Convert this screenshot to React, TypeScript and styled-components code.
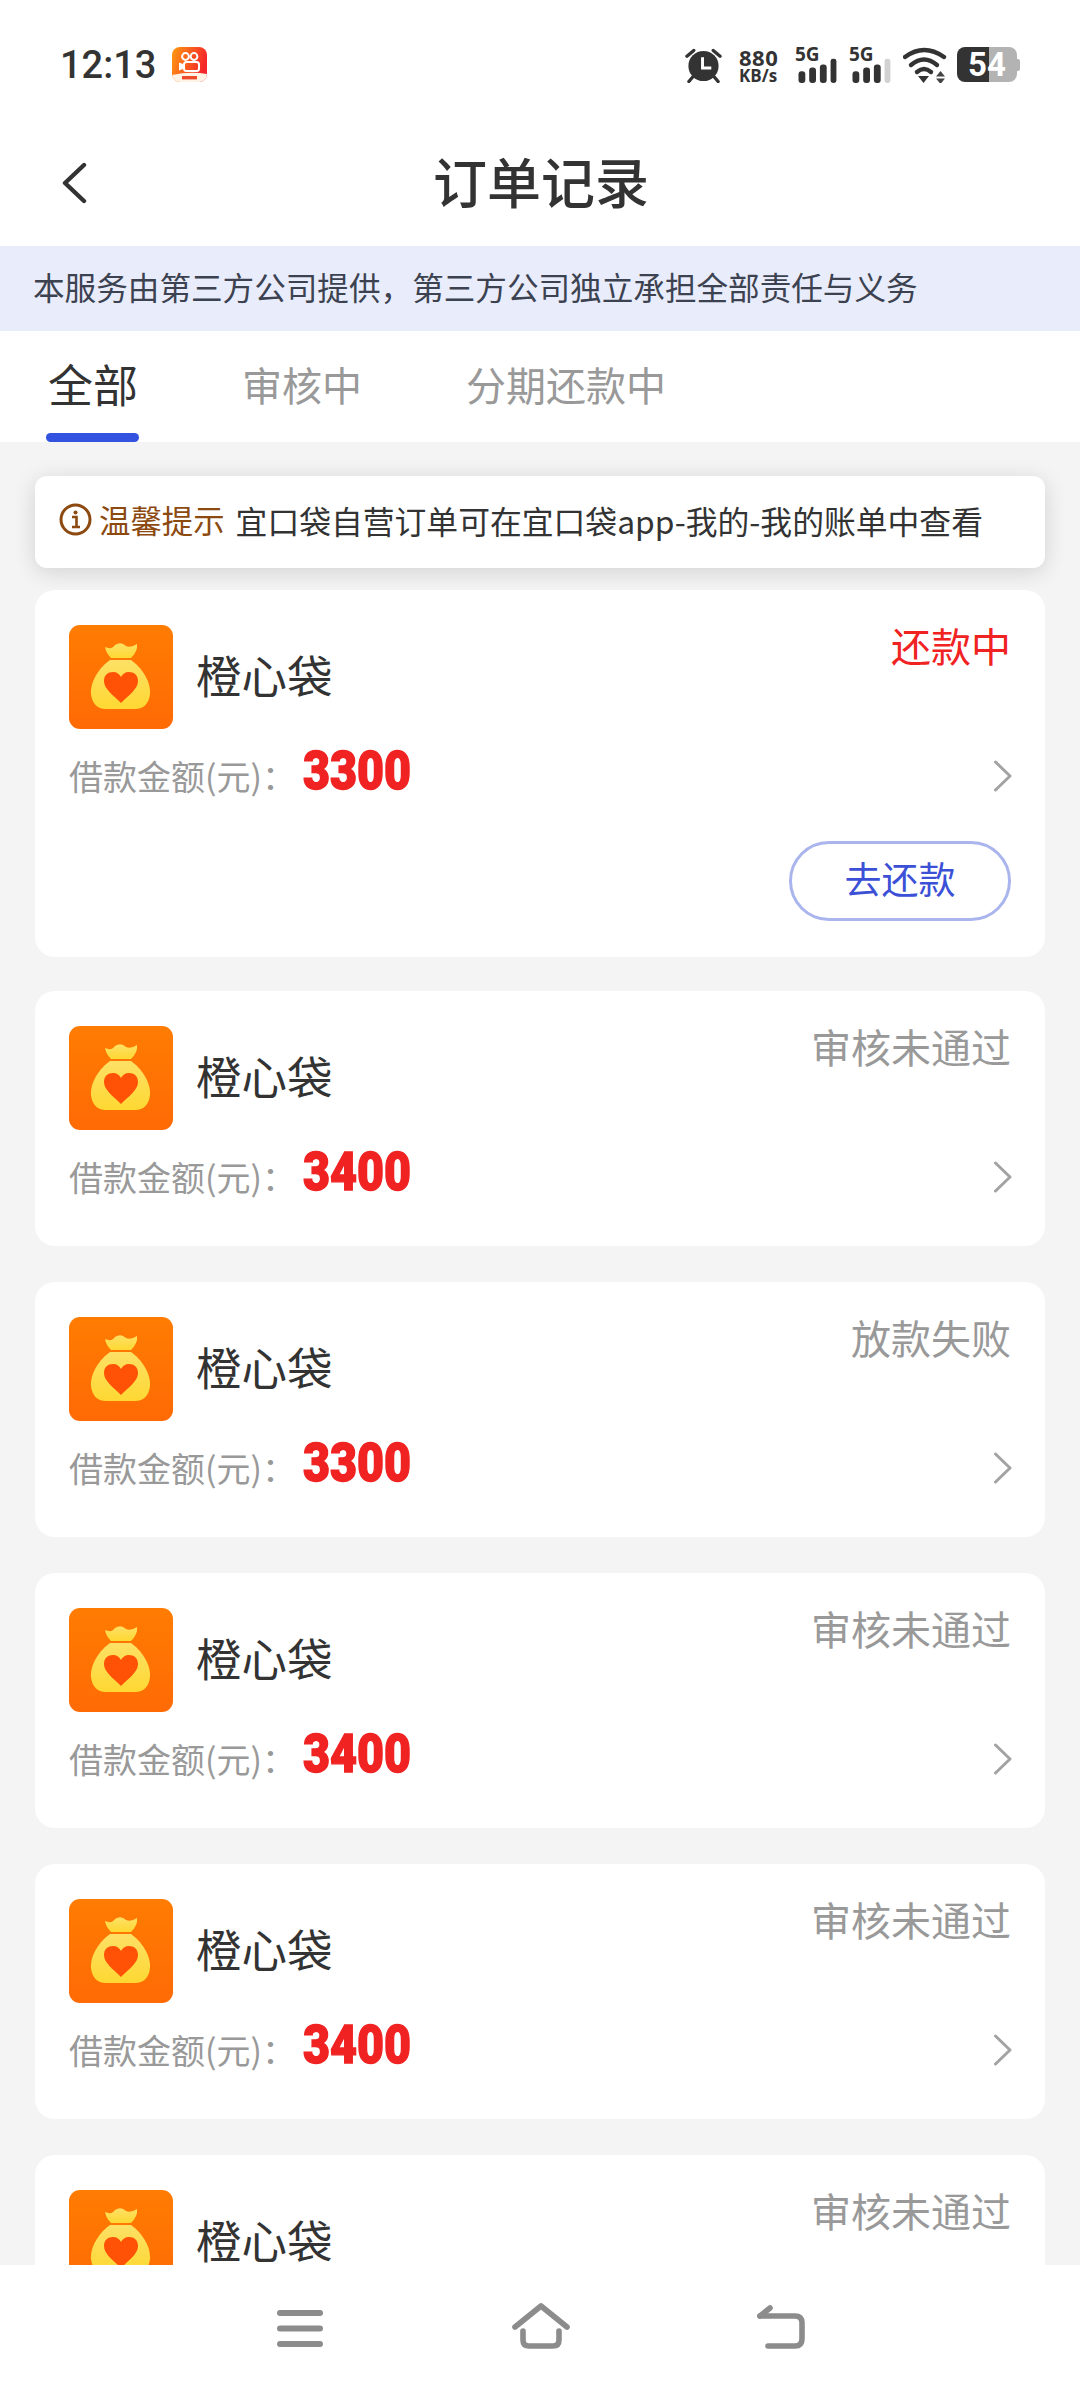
import React from "react";
import styled, { createGlobalStyle } from "styled-components";

const CJK = `"Noto Sans CJK SC", "Noto Sans", sans-serif`;

const Global = createGlobalStyle`
  html, body { margin: 0; padding: 0; background: #fff; }
  * { box-sizing: border-box; }
`;

const Page = styled.div`
  width: 1080px;
  height: 2392px;
  display: flex;
  flex-direction: column;
  overflow: hidden;
  background: #f4f4f4;
  font-family: ${CJK};
  color: #333;
`;

const StatusBar = styled.div`
  height: 125px;
  flex-shrink: 0;
  background: #fff;
  display: flex;
  align-items: flex-start;
  padding: 47px 60px 0 60px;
`;

const Time = styled.div`
  width: 112px;
  font-family: Roboto, sans-serif;
  font-weight: 500;
  font-size: 38px;
  line-height: 36px;
  color: #333;
`;

const StatusRight = styled.div`
  margin-left: auto;
  display: flex;
  align-items: flex-start;
`;

const Speed = styled.div`
  width: 44px;
  margin: 0 12px 0 17px;
  font-family: "Open Sans", sans-serif;
  font-weight: 700;
  color: #333;
  display: flex;
  flex-direction: column;
  align-items: flex-start;
  white-space: nowrap;
`;

const SpeedNum = styled.span`
  font-size: 22px;
  line-height: 20px;
  letter-spacing: 0.5px;
`;

const SpeedUnit = styled.span`
  font-size: 17px;
  line-height: 18px;
`;

const Signal = styled.div`
  width: 42px;
  height: 36px;
  margin-right: 12px;
  display: flex;
  flex-direction: column;
`;

const SignalLabel = styled.span`
  font-family: "Open Sans", sans-serif;
  font-weight: 700;
  font-size: 19px;
  line-height: 13px;
  margin-top: 1px;
  height: 0;
  color: #333;
`;

const Battery = styled.div`
  width: 60px;
  height: 35px;
  margin-left: 10px;
  border-radius: 8px;
  background: linear-gradient(90deg, #333 0, #333 32px, #b3b3b3 32px, #b3b3b3 100%);
  color: #fff;
  font-family: Roboto, sans-serif;
  font-weight: 700;
  font-size: 33px;
  line-height: 35px;
  text-align: center;
`;

const BatteryCap = styled.div`
  width: 3px;
  height: 12px;
  margin-top: 12px;
  border-radius: 0 2px 2px 0;
  background: #b3b3b3;
`;

const NavRow = styled.div`
  height: 121px;
  flex-shrink: 0;
  background: #fff;
  display: flex;
  align-items: center;
  padding: 0 0 6px 61px;
`;

const Title = styled.h1`
  margin: -4px 0 0 346px;
  font-size: 54px;
  line-height: 70px;
  font-weight: 500;
  color: #333;
`;

const Banner = styled.div`
  height: 85px;
  flex-shrink: 0;
  background: #e8ecfb;
  padding-left: 33px;
  font-size: 31.6px;
  line-height: 81px;
  color: #3c4250;
  white-space: nowrap;
`;

const Tabs = styled.div`
  height: 111px;
  flex-shrink: 0;
  background: #fff;
  display: flex;
  gap: 104px;
  padding-left: 48px;
`;

const Tab = styled.div<{ $active?: boolean }>`
  position: relative;
  font-size: ${(p) => (p.$active ? 45 : 40)}px;
  line-height: 106px;
  color: ${(p) => (p.$active ? "#333" : "#999")};
  white-space: nowrap;

  ${(p) =>
    p.$active &&
    `&::after {
      content: "";
      position: absolute;
      left: -2px;
      right: -1px;
      bottom: 0;
      height: 9px;
      border-radius: 5px;
      background: #3352e0;
    }`}
`;

const List = styled.div`
  flex: 1;
  min-height: 0;
  overflow: hidden;
  padding: 34px 35px 0;
`;

const Notice = styled.div`
  height: 92px;
  margin-bottom: 22px;
  background: #fff;
  border-radius: 12px;
  box-shadow: 0 4px 22px rgba(0, 0, 0, 0.14);
  display: flex;
  align-items: center;
  padding: 0 0 5px 24px;
  white-space: nowrap;
`;

const NoticeTag = styled.span`
  font-size: 31.4px;
  color: #8c4a10;
  margin: 0 11px 0 7px;
`;

const NoticeText = styled.span`
  font-size: 31.8px;
  color: #333;
`;

const Card = styled.div`
  background: #fff;
  border-radius: 20px;
  padding: 35px 34px 44px;
  margin-bottom: 36px;
`;

const CardHead = styled.div`
  display: flex;
  align-items: flex-start;
  justify-content: space-between;
`;

const Brand = styled.div`
  display: flex;
  align-items: center;
  gap: 23px;
`;

const BrandName = styled.div`
  font-size: 45.5px;
  line-height: 60px;
  margin-top: -7px;
  color: #333;
`;

const Status = styled.div<{ $tone: "red" | "grey" }>`
  font-size: 40px;
  line-height: 50px;
  margin-top: -5px;
  color: ${(p) => (p.$tone === "red" ? "#f02222" : "#999")};
`;

const AmountRow = styled.div`
  height: 50px;
  margin-top: 22px;
  display: flex;
  align-items: center;
  justify-content: space-between;
`;

const AmountLeft = styled.div`
  display: flex;
  align-items: center;
`;

const AmountLabel = styled.span`
  width: 234px;
  font-size: 34px;
  line-height: 50px;
  color: #999;
  white-space: nowrap;
`;

const AmountValue = styled.span`
  display: inline-block;
  margin-top: -10px;
  transform: scaleX(0.88);
  transform-origin: left center;
  font-family: Roboto, sans-serif;
  font-weight: 900;
  font-size: 53px;
  line-height: 50px;
  color: #f02222;
  -webkit-text-stroke: 1.4px #f02222;
`;

const ChevronSlot = styled.div`
  display: flex;
  margin-right: -1px;
`;

const ActionRow = styled.div`
  display: flex;
  justify-content: flex-end;
  margin: 40px 0 -8px;
`;

const PayButton = styled.button`
  width: 222px;
  height: 80px;
  background: #fff;
  border: 3.5px solid #a9b5ec;
  border-radius: 40px;
  padding: 0 0 6px;
  font-family: ${CJK};
  font-size: 37px;
  color: #3b50d6;
`;

const FirstGap = styled.div`
  height: 0;
  margin-top: -2px;
`;

const BottomBar = styled.div`
  height: 127px;
  flex-shrink: 0;
  background: #fff;
  display: flex;
  align-items: flex-start;
  padding: 38px 0 0 277px;
`;

const BottomSlot = styled.div<{ $width: number; $top: number }>`
  width: ${(p) => p.$width}px;
  margin-top: ${(p) => p.$top}px;
`;

const Clock = () => (
  <svg width="37" height="36" viewBox="0 0 38 36">
    <path d="M2 9 L9 3 M36 9 L29 3 M9 29 L4 35 M29 29 L34 35" stroke="#333" strokeWidth="3.4" strokeLinecap="round" />
    <circle cx="19" cy="19" r="15.5" fill="#333" />
    <path d="M18 10 V21 H27" fill="none" stroke="#fff" strokeWidth="3" />
  </svg>
);

const Bars = ({ dim }: { dim?: boolean }) => (
  <svg width="42" height="36" viewBox="0 0 42 36" fill="#333">
    <rect x="3" y="24" width="7" height="12" rx="3" />
    <rect x="14" y="20" width="7" height="16" rx="3" />
    <rect x="25" y="17" width="7" height="19" rx="3" />
    <rect x="36" y="11" width="6" height="25" rx="2.5" fill={dim ? "#d2d2d2" : "#333"} />
  </svg>
);

const Wifi = () => (
  <svg width="44" height="36" viewBox="0 0 44 36" fill="none">
    <path d="M2 10 Q21 -4 41 10" stroke="#333" strokeWidth="4.4" strokeLinecap="round" />
    <path d="M8 18 Q21 7 34 18" stroke="#333" strokeWidth="4.4" strokeLinecap="round" />
    <path d="M14 25 Q21 19 28 25" stroke="#333" strokeWidth="4.4" strokeLinecap="round" />
    <path d="M15 29 H26 L20.5 36 Z" fill="#333" />
    <path d="M33 29.5 L37.5 24 L42 29.5 Z M33 31.5 H42 L37.5 37 Z" fill="#444" />
  </svg>
);

const VideoApp = () => (
  <svg width="35" height="35" viewBox="0 0 35 35">
    <defs>
      <linearGradient id="vid" x1="0" y1="0" x2="1" y2="0.3">
        <stop offset="0" stopColor="#ff9a10" />
        <stop offset="1" stopColor="#f5262a" />
      </linearGradient>
      <clipPath id="vidClip">
        <rect width="35" height="35" rx="8" />
      </clipPath>
    </defs>
    <g clipPath="url(#vidClip)">
      <rect width="35" height="35" fill="url(#vid)" />
      <path d="M0 28 Q18 24 35 27 V35 H0 Z" fill="#fff3e6" />
      <circle cx="13.5" cy="9.5" r="3.4" fill="none" stroke="#fff" strokeWidth="2" />
      <circle cx="22" cy="9.5" r="3.4" fill="none" stroke="#fff" strokeWidth="2" />
      <rect x="12" y="15" width="15" height="9" rx="2.5" fill="none" stroke="#fff" strokeWidth="2" />
      <path d="M11 17 L7 15.5 V23.5 L11 22 Z" fill="#fff" />
      <rect x="10" y="29" width="15" height="3.4" fill="#ee4a2a" />
    </g>
  </svg>
);

const BagLogo = () => (
  <svg width="104" height="104" viewBox="0 0 104 104">
    <defs>
      <linearGradient id="tile" x1="0" y1="0" x2="0" y2="1">
        <stop offset="0" stopColor="#ff7c02" />
        <stop offset="1" stopColor="#ff6a05" />
      </linearGradient>
      <linearGradient id="bag" x1="0" y1="0" x2="0" y2="1">
        <stop offset="0" stopColor="#fde066" />
        <stop offset="1" stopColor="#fed832" />
      </linearGradient>
    </defs>
    <rect width="104" height="104" rx="11" fill="url(#tile)" />
    <path
      d="M36 22 Q43 25 46 20 Q52 16 57 21 Q62 23 68 19 Q69 26 62 33 H42 Q37 28 36 22 Z"
      fill="url(#bag)"
    />
    <path
      d="M41 35 H62 C72 42 82 56 81 69 C80 78 75 84 66 84 H37 C28 84 23 78 22 69 C21 56 31 42 41 35 Z"
      fill="url(#bag)"
    />
    <path
      d="M52 78 C44 70 35 64 35 56 C35 50 39 47 44 47 C48 47 50.5 49 52 52 C53.5 49 56 47 60 47 C65 47 69 50 69 56 C69 64 60 70 52 78 Z"
      fill="#ff5207"
    />
  </svg>
);

const InfoIcon = () => (
  <svg width="33" height="33" viewBox="0 0 33 33" fill="none">
    <circle cx="16.5" cy="16.5" r="14.5" stroke="#8c4a10" strokeWidth="3" />
    <path d="M13 14 H17.5 V24 M13 24 H21" stroke="#8c4a10" strokeWidth="2.6" />
    <circle cx="16.5" cy="9.5" r="2" fill="#8c4a10" />
  </svg>
);

const BackArrow = () => (
  <svg width="26" height="42" viewBox="0 0 26 42" fill="none">
    <path d="M23 3 L4 21 L23 39" stroke="#333" strokeWidth="4.4" strokeLinecap="round" strokeLinejoin="round" />
  </svg>
);

const Chevron = () => (
  <svg width="18" height="32" viewBox="0 0 18 32" fill="none">
    <path d="M1.5 2 L16 16 L1.5 30" stroke="#a3a3a3" strokeWidth="3" strokeLinecap="round" strokeLinejoin="round" />
  </svg>
);

const MenuIcon = () => (
  <svg width="46" height="37" viewBox="0 0 46 37">
    <path d="M3 3 H43 M3 18.5 H43 M3 34 H43" stroke="#8c8c8c" strokeWidth="6" strokeLinecap="round" />
  </svg>
);

const HomeIcon = () => (
  <svg width="58" height="46" viewBox="0 0 58 46" fill="none">
    <path d="M3 24 L29 3 L55 24" stroke="#8c8c8c" strokeWidth="5.6" strokeLinecap="round" strokeLinejoin="round" />
    <path d="M11 28 V37 Q11 43 17 43 H41 Q47 43 47 37 V28" stroke="#8c8c8c" strokeWidth="5.6" strokeLinecap="round" />
  </svg>
);

const ReturnIcon = () => (
  <svg width="48" height="44" viewBox="0 0 48 44" fill="none">
    <path d="M3 11 L13 3" stroke="#8c8c8c" strokeWidth="5.6" strokeLinecap="round" />
    <path d="M3 11 H38 Q45 11 45 18 V34 Q45 41 38 41 H11" stroke="#8c8c8c" strokeWidth="5.6" strokeLinecap="round" />
  </svg>
);

interface Order {
  amount: number;
  status: string;
  tone: "red" | "grey";
  action?: string;
}

const orders: Order[] = [
  { amount: 3300, status: "还款中", tone: "red", action: "去还款" },
  { amount: 3400, status: "审核未通过", tone: "grey" },
  { amount: 3300, status: "放款失败", tone: "grey" },
  { amount: 3400, status: "审核未通过", tone: "grey" },
  { amount: 3400, status: "审核未通过", tone: "grey" },
  { amount: 3400, status: "审核未通过", tone: "grey" },
];

export default function App() {
  return (
    <Page>
      <Global />
      <StatusBar>
        <Time>12:13</Time>
        <VideoApp />
        <StatusRight>
          <Clock />
          <Speed>
            <SpeedNum>880</SpeedNum>
            <SpeedUnit>KB/s</SpeedUnit>
          </Speed>
          <Signal>
            <SignalLabel>5G</SignalLabel>
            <Bars />
          </Signal>
          <Signal>
            <SignalLabel>5G</SignalLabel>
            <Bars dim />
          </Signal>
          <Wifi />
          <Battery>54</Battery>
          <BatteryCap />
        </StatusRight>
      </StatusBar>

      <NavRow>
        <BackArrow />
        <Title>订单记录</Title>
      </NavRow>

      <Banner>本服务由第三方公司提供，第三方公司独立承担全部责任与义务</Banner>

      <Tabs>
        <Tab $active>全部</Tab>
        <Tab>审核中</Tab>
        <Tab>分期还款中</Tab>
      </Tabs>

      <List>
        <Notice>
          <InfoIcon />
          <NoticeTag>温馨提示</NoticeTag>
          <NoticeText>宜口袋自营订单可在宜口袋app-我的-我的账单中查看</NoticeText>
        </Notice>
        {orders.map((o, i) => (
          <React.Fragment key={i}>
            <Card>
              <CardHead>
                <Brand>
                  <BagLogo />
                  <BrandName>橙心袋</BrandName>
                </Brand>
                <Status $tone={o.tone}>{o.status}</Status>
              </CardHead>
              <AmountRow>
                <AmountLeft>
                  <AmountLabel>借款金额(元)：</AmountLabel>
                  <AmountValue>{o.amount}</AmountValue>
                </AmountLeft>
                <ChevronSlot>
                  <Chevron />
                </ChevronSlot>
              </AmountRow>
              {o.action && (
                <ActionRow>
                  <PayButton>{o.action}</PayButton>
                </ActionRow>
              )}
            </Card>
            {o.action && <FirstGap />}
          </React.Fragment>
        ))}
      </List>

      <BottomBar>
        <BottomSlot $width={235} $top={7}>
          <MenuIcon />
        </BottomSlot>
        <BottomSlot $width={245} $top={0}>
          <HomeIcon />
        </BottomSlot>
        <BottomSlot $width={48} $top={2}>
          <ReturnIcon />
        </BottomSlot>
      </BottomBar>
    </Page>
  );
}
